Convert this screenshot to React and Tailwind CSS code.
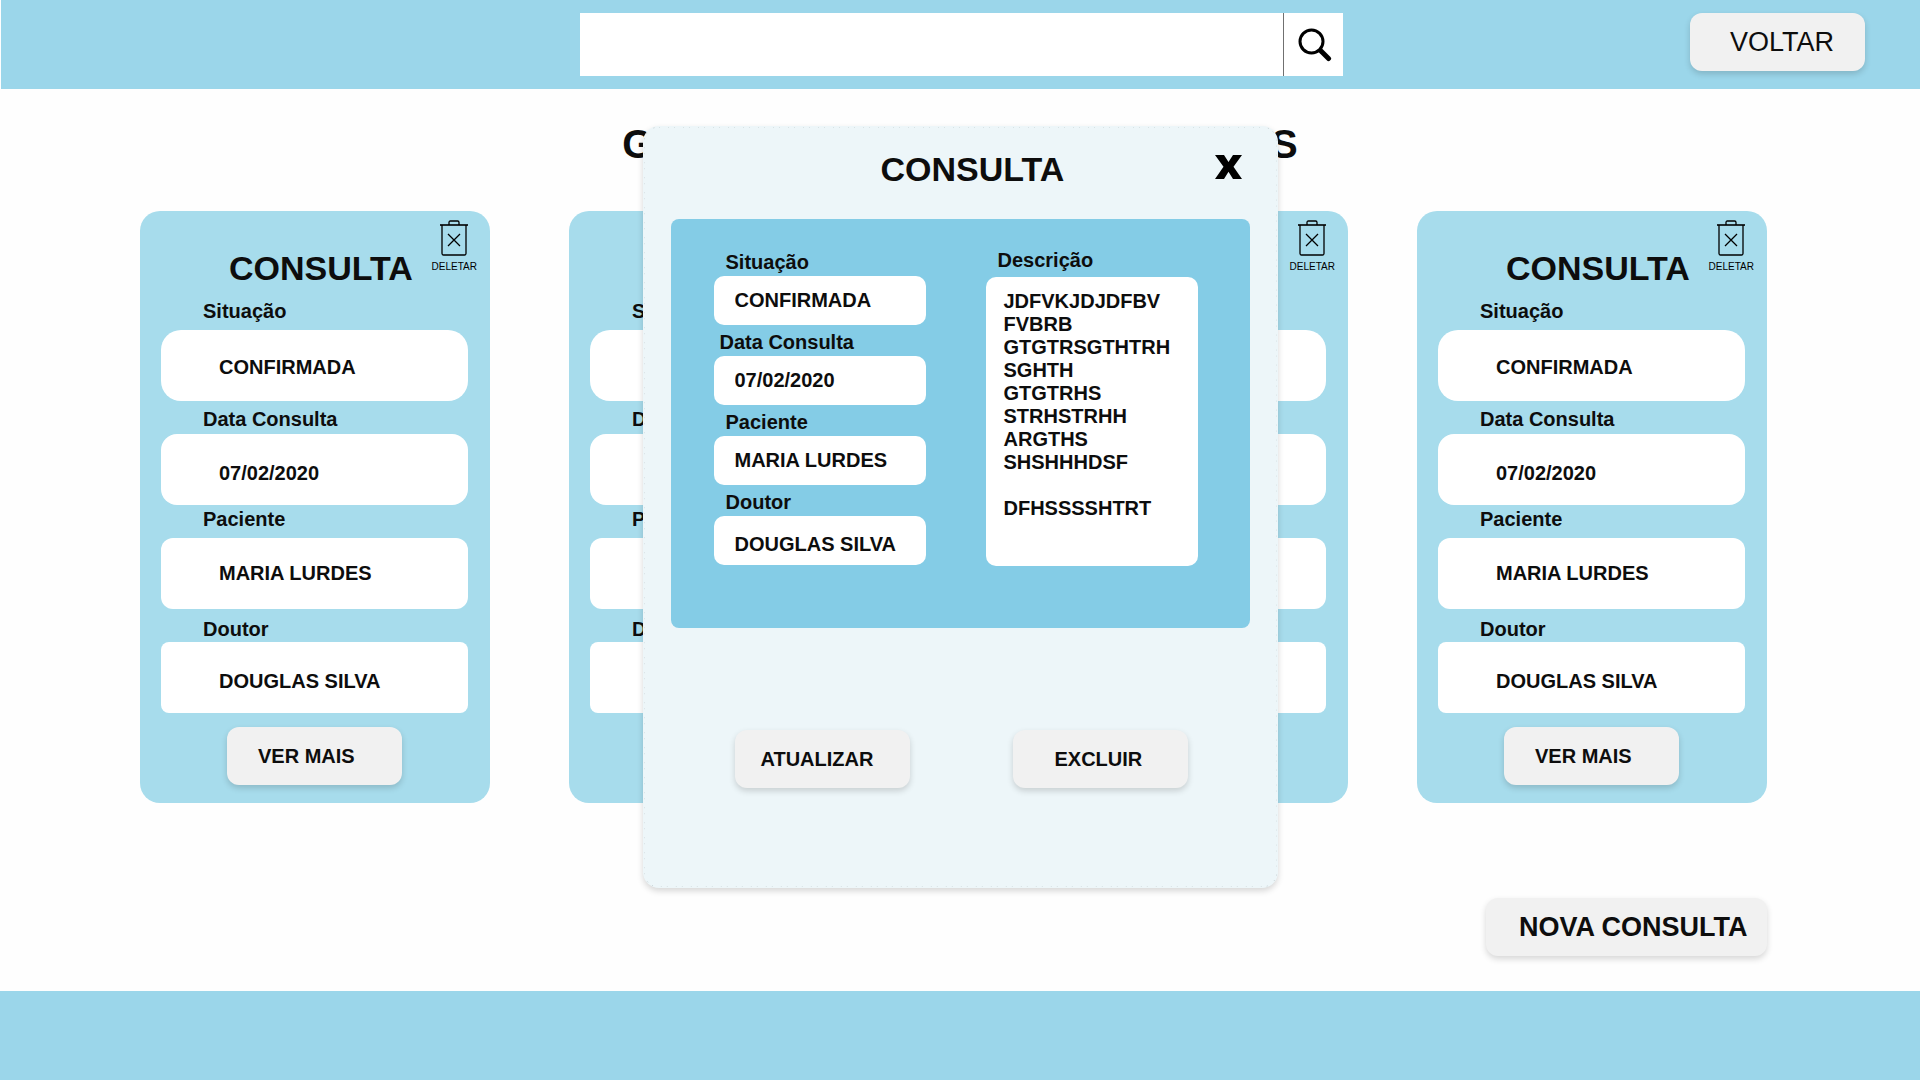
import React from "react";

const fields = [
  { label: "Situação", value: "CONFIRMADA" },
  { label: "Data Consulta", value: "07/02/2020" },
  { label: "Paciente", value: "MARIA LURDES" },
  { label: "Doutor", value: "DOUGLAS SILVA" },
];

const cardFieldStyles = [
  { label: "", box: "rounded-[20px] pt-1" },
  { label: "pt-1", box: "rounded-2xl pt-2" },
  { label: "", box: "rounded-xl" },
  { label: "pt-1.5", box: "rounded-lg pt-2" },
];

const dialogFieldStyles = [
  { label: "pl-3", box: "" },
  { label: "pl-1.5", box: "" },
  { label: "pl-3", box: "" },
  { label: "pl-3", box: "pt-2" },
];

const description = `JDFVKJDJDFBV
FVBRB
GTGTRSGTHTRH
SGHTH
GTGTRHS
STRHSTRHH
ARGTHS
SHSHHHDSF

DFHSSSSHTRT`;

const buttonBase =
  "flex h-[58px] items-center rounded-xl bg-[#f1f1f1] shadow-[0_3px_6px_rgba(0,0,0,0.16)] whitespace-nowrap";

function TrashIcon() {
  return (
    <svg width="30" height="36" viewBox="0 0 30 36" fill="none" stroke="currentColor" strokeWidth="1.3">
      <path d="M1 5h28" strokeWidth="1.6" />
      <path d="M10 5V2.4Q10 1 11.4 1h7.2Q20 1 20 2.4V5" />
      <path d="M3 5v28.500Q3 35 4.500 35h21Q27 35 27 33.500V5" />
      <path d="M9 14l12 12M21 14L9 26" />
    </svg>
  );
}

function SearchIcon() {
  return (
    <svg width="34" height="34" viewBox="0 0 34 34" fill="none" stroke="currentColor">
      <circle cx="13.500" cy="13.500" r="11.500" strokeWidth="3" />
      <path d="M21.500 21.500l1.500 1.500" strokeWidth="4" />
      <path d="M23.500 23.500L30.500 30.500" strokeWidth="5" strokeLinecap="round" />
    </svg>
  );
}

function ConsultaCard({ id }) {
  return (
    <article className="relative flex h-[592px] w-[350px] shrink-0 flex-col rounded-[20px] bg-[#a7dcec] pt-9 pr-[22px] pl-[21px]">
      <button type="button" className="absolute top-[9px] right-[13px] flex flex-col items-center gap-1.5 text-black">
        <TrashIcon />
        <span className="text-[10px] leading-[10px]">DELETAR</span>
      </button>
      <h2 className="pl-[68px] text-[34px] leading-[42px] font-bold">CONSULTA</h2>
      <div className="flex flex-col pt-2.5">
        {fields.map((f, i) => (
          <div key={f.label} className="flex h-[104px] flex-col">
            <label
              htmlFor={`${id}-${i}`}
              className={`h-[31px] shrink-0 pl-[42px] text-xl leading-6 font-bold ${cardFieldStyles[i].label}`}
            >
              {f.label}
            </label>
            <input
              id={`${id}-${i}`}
              defaultValue={f.value}
              className={`h-[71px] w-full bg-white pl-[58px] text-xl font-bold ${cardFieldStyles[i].box}`}
            />
          </div>
        ))}
      </div>
      <button type="button" className={`${buttonBase} mt-3 w-[175px] self-center pl-[31px] text-xl font-bold`}>
        VER MAIS
      </button>
    </article>
  );
}

function ConsultaDialog() {
  return (
    <section
      role="dialog"
      aria-labelledby="dialog-title"
      className="absolute inset-x-0 top-[126px] mx-auto flex h-[762px] w-[635px] flex-col rounded-2xl bg-[#edf6f9] px-7 pt-[23px] shadow-[0_3px_6px_rgba(0,0,0,0.16)]"
    >
      <svg className="pointer-events-none absolute inset-0 h-full w-full p-px" fill="none" aria-hidden="true">
        <rect width="100%" height="100%" rx="15" stroke="#c3cdd0" strokeDasharray="1 8 1 5" overflow="visible" />
      </svg>
      <header className="flex h-[70px] items-start justify-between pr-2 pl-[210px]">
        <h2 id="dialog-title" className="text-[34px] leading-10 font-bold">
          CONSULTA
        </h2>
        <button type="button" aria-label="Fechar" className="pt-1.5 text-black">
          <svg width="27" height="24" viewBox="0 0 27 24" fill="currentColor">
            <path d="M0 0h9l4.500 7L18 0h9l-8.500 11.700L27 24h-9l-4.500-7.300L9 24H0l8.500-12.300z" />
          </svg>
        </button>
      </header>
      <div className="flex h-[409px] items-start justify-between rounded-lg bg-[#84cce6] pt-[29px] pr-[52px] pl-[43px]">
        <div className="flex w-[212px] flex-col">
          {fields.map((f, i) => (
            <div key={f.label} className="flex h-20 flex-col">
              <label
                htmlFor={`dialog-${i}`}
                className={`h-7 text-xl leading-7 font-bold ${dialogFieldStyles[i].label}`}
              >
                {f.label}
              </label>
              <input
                id={`dialog-${i}`}
                defaultValue={f.value}
                className={`h-[49px] w-full rounded-[10px] bg-white pl-[21px] text-xl font-bold ${dialogFieldStyles[i].box}`}
              />
            </div>
          ))}
        </div>
        <div className="flex w-[212px] flex-col">
          <label htmlFor="dialog-description" className="h-[29px] pl-3 text-xl leading-6 font-bold">
            Descrição
          </label>
          <textarea
            id="dialog-description"
            defaultValue={description}
            className="h-[289px] w-full resize-none overflow-hidden rounded-[10px] bg-white pt-[13px] pl-[18px] text-xl leading-[23px] font-bold"
          />
        </div>
      </div>
      <div className="flex justify-between pt-[102px] pr-[62px] pl-16">
        <button type="button" className={`${buttonBase} w-[175px] pl-[26px] text-xl font-bold`}>
          ATUALIZAR
        </button>
        <button type="button" className={`${buttonBase} w-[175px] pl-[42px] text-xl font-bold`}>
          EXCLUIR
        </button>
      </div>
    </section>
  );
}

export default function App() {
  return (
    <div className="relative flex min-h-screen flex-col bg-[#fefefe] font-['Liberation_Sans',Arial,sans-serif] text-[#0d0d0d]">
      <header className="ml-px grid h-[89px] grid-cols-[1fr_763px_1fr] items-start bg-[#9bd6ea] pt-[13px] pl-px">
        <form role="search" className="col-start-2 flex h-[63px] bg-white">
          <input type="search" aria-label="Pesquisar" className="min-w-0 flex-1 bg-white px-4 text-xl outline-none" />
          <button
            type="button"
            aria-label="Pesquisar"
            className="flex w-[60px] items-center justify-center border-l border-[#707070] pl-1 text-black"
          >
            <SearchIcon />
          </button>
        </form>
        <button type="button" className={`${buttonBase} mr-[55px] w-[175px] justify-self-end pl-10 text-[27px]`}>
          VOLTAR
        </button>
      </header>

      <main className="flex flex-1 flex-col">
        <h1 className="pt-[31px] text-center text-[40px] leading-[48px] font-bold">GERENCIAMENTO DE CONSULTAS</h1>
        <div className="flex justify-between pt-[43px] pr-[153px] pl-[140px]">
          <div className="flex gap-[79px]">
            <ConsultaCard id="c1" />
            <ConsultaCard id="c2" />
            <ConsultaCard id="c3" />
          </div>
          <ConsultaCard id="c4" />
        </div>
        <div className="flex justify-end pt-[95px] pr-[153px]">
          <button type="button" className={`${buttonBase} w-[281px] pl-[33px] text-[27px] font-bold`}>
            NOVA CONSULTA
          </button>
        </div>
      </main>

      <footer className="h-[89px] bg-[#9bd6ea]" />
      <ConsultaDialog />
    </div>
  );
}
